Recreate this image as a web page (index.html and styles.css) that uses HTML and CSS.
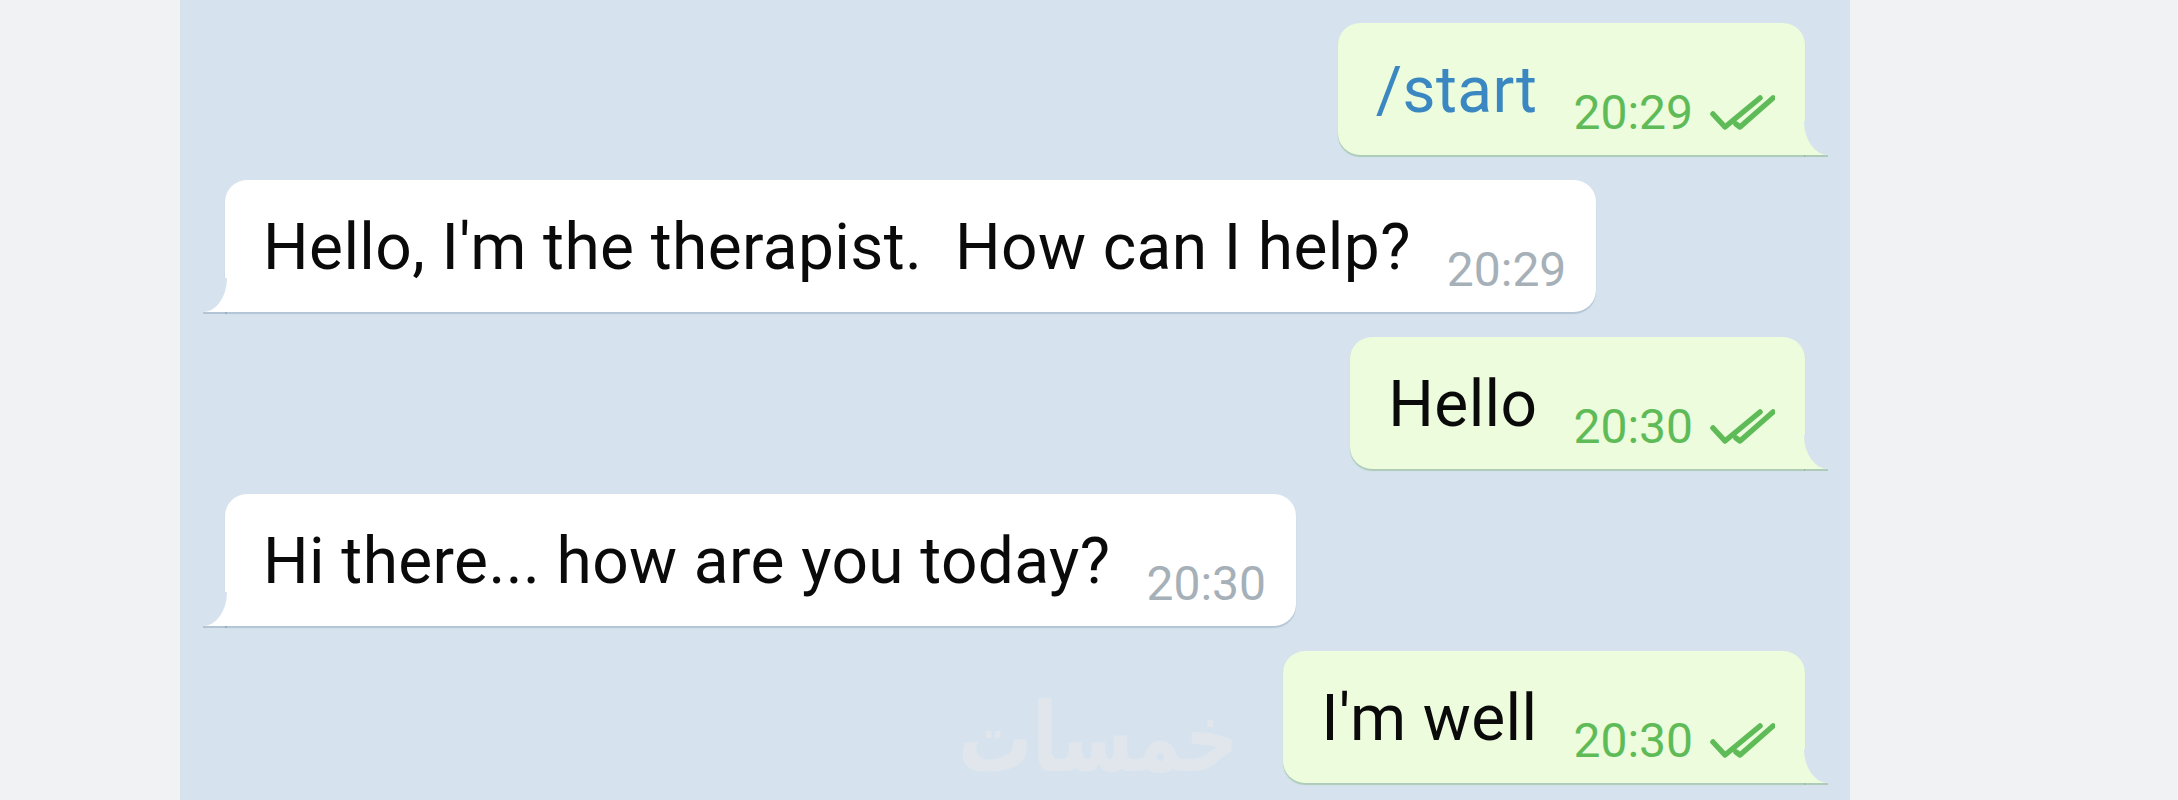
FILE: index.html
```html
<!DOCTYPE html>
<html lang="en">
<head>
  <meta charset="UTF-8" />
  <meta name="viewport" content="width=device-width, initial-scale=1.0"/>
  <title>Therapist bot - chat</title>
  <link rel="stylesheet" href="styles.css">
</head>
<body>
  <div class="chat">
    <div class="bubble out">
      <span class="text cmd">/start</span><span class="meta">20:29<svg class="ticks" viewBox="0 0 66 36" width="66" height="36"><path d="M4 19 L16 32 L51 3 M27 29 L31 32 L64 3"/></svg></span>
    </div>

    <div class="bubble in">
      <span class="text">Hello, I'm the therapist.&nbsp; How can I help?</span><span class="meta">20:29</span>
    </div>

    <div class="bubble out">
      <span class="text">Hello</span><span class="meta">20:30<svg class="ticks" viewBox="0 0 66 36" width="66" height="36"><path d="M4 19 L16 32 L51 3 M27 29 L31 32 L64 3"/></svg></span>
    </div>

    <div class="bubble in">
      <span class="text">Hi there... how are you today?</span><span class="meta">20:30</span>
    </div>

    <div class="bubble out">
      <span class="text">I'm well</span><span class="meta">20:30<svg class="ticks" viewBox="0 0 66 36" width="66" height="36"><path d="M4 19 L16 32 L51 3 M27 29 L31 32 L64 3"/></svg></span>
    </div>

    <!-- site watermark -->
    <div class="watermark" dir="rtl">خمسات</div>
  </div>
</body>
</html>
```

FILE: styles.css
```css
* {
  box-sizing: border-box;
}

body {
  margin: 0;
  padding: 0;
  background: #f1f2f4;
  font-family: Roboto, 'Liberation Sans', sans-serif;
  height: 800px;
  overflow: hidden;
}

.chat {
  position: relative;
  margin-left: 180px;
  width: 1670px;
  height: 800px;
  background: #d6e3ee;
  padding: 23px 45px 0 45px;
  display: flex;
  flex-direction: column;
  gap: 25px;
}

.bubble {
  position: relative;
  height: 132px;
  padding: 31px 30px 27px 38px;
  font-size: 64px;
  letter-spacing: 0.4px;
  line-height: 74px;
  color: #0a0a0a;
  white-space: nowrap;
}

.bubble::before,
.bubble::after {
  content: "";
  position: absolute;
  bottom: 0;
  width: 24px;
  height: 34px;
}

.bubble.in {
  align-self: flex-start;
  background: #fff;
  border-radius: 22px 22px 22px 0;
  box-shadow: 0 2px 1px rgba(90, 120, 150, 0.28);
}

.bubble.in::before {
  left: -22px;
  background: #fff;
  box-shadow: 0 2px 0 rgba(90, 120, 150, 0.28);
}

.bubble.in::after {
  left: -22px;
  background: #d6e3ee;
  border-bottom-right-radius: 100% 100%;
}

.bubble.out {
  align-self: flex-end;
  background: #ecfcdc;
  border-radius: 22px 22px 0 22px;
  box-shadow: 0 2px 1px rgba(80, 150, 60, 0.3);
}

.bubble.out::before {
  right: -23px;
  background: #ecfcdc;
  box-shadow: 0 2px 0 rgba(80, 150, 60, 0.3);
}

.bubble.out::after {
  right: -23px;
  background: #d6e3ee;
  border-bottom-left-radius: 100% 100%;
}

.cmd {
  color: #3a87c1;
}

.meta {
  margin-left: 36px;
  font-size: 48px;
  letter-spacing: 0;
  line-height: 0;
  vertical-align: -17px;
  color: #a6b0b8;
}

.out .meta {
  color: #5fbb57;
}

.ticks {
  margin-left: 16px;
  vertical-align: -2px;
}

.ticks path {
  fill: none;
  stroke: #5fbb57;
  stroke-width: 5.5;
  stroke-linecap: round;
  stroke-linejoin: round;
}

.watermark {
  position: absolute;
  left: 778px;
  top: 694px;
  font-family: 'DejaVu Sans', sans-serif;
  font-weight: bold;
  font-size: 74px;
  color: #e0e6ec;
  transform: scaleY(1.3);
}
```
